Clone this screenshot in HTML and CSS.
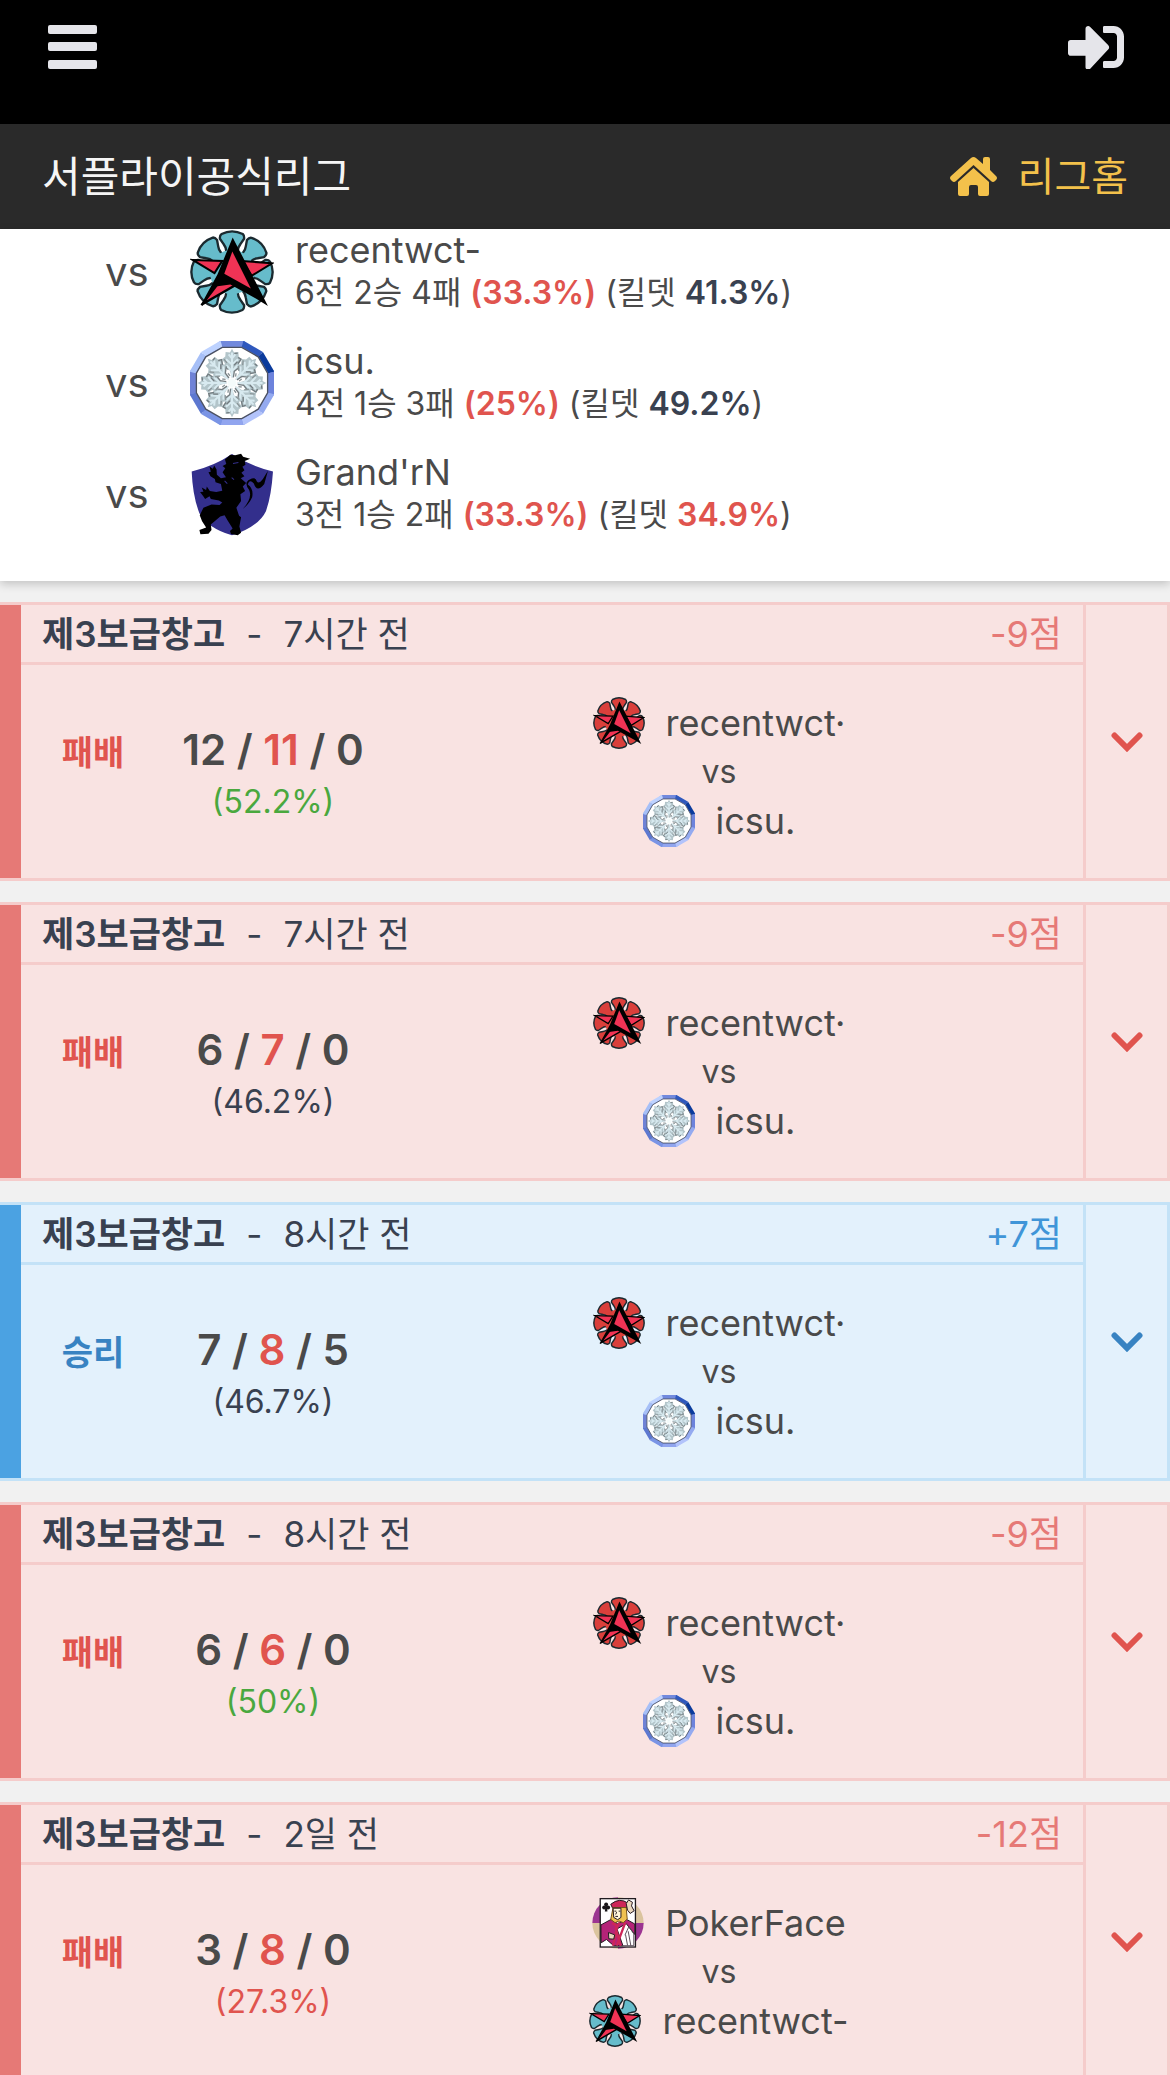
FILE: index.html
```html
<!DOCTYPE html>
<html lang="ko">
<head>
<meta charset="utf-8">
<meta name="viewport" content="width=device-width, initial-scale=1">
<title>서플라이공식리그</title>
<link rel="stylesheet" href="styles.css">
</head>
<body>
<svg class="sprite" aria-hidden="true">
  <defs>
    <path id="petal" d="M108 64 Q107 50 100 42 L89 26 Q88 16 94 12 Q125 -4 157 12 Q162 16 161 26 L150 42 Q143 50 142 64"/>
    <g id="plume">
      <path d="M125 112 L119 88 L100 78 L104 66 L95 54 L105 46 L106 33 L119 34 L125 23 L131 34 L144 33 L145 46 L155 54 L146 66 L150 78 L131 88Z" fill="#b3c5ca"/>
      <path d="M125 108V34M125 90L108 72M125 90L142 72M125 70L107 54M125 70L143 54M125 52L115 40M125 52L135 40" fill="none" stroke="#d8eaf0" stroke-width="6"/>
      <path d="M129 108L132 90L148 78M143 67L152 54L143 49M142 36L132 37M131 72L141 62" fill="none" stroke="#737c80" stroke-width="4"/>
      <path d="M114 85L103 76M110 65L101 54M119 104L113 96" fill="none" stroke="#8b9598" stroke-width="4"/>
    </g>
  </defs>
  <symbol id="flower" viewBox="0 0 250 250">
    <g stroke="#1b2a30" stroke-width="7" stroke-linejoin="round">
      <use href="#petal"/>
      <use href="#petal" transform="rotate(45 125 125)"/>
      <use href="#petal" transform="rotate(90 125 125)"/>
      <use href="#petal" transform="rotate(135 125 125)"/>
      <use href="#petal" transform="rotate(180 125 125)"/>
      <use href="#petal" transform="rotate(225 125 125)"/>
      <use href="#petal" transform="rotate(270 125 125)"/>
      <use href="#petal" transform="rotate(315 125 125)"/>
    </g>
    <circle cx="125" cy="125" r="66"/>
    <path d="M8 89L96 92L73 128ZM154 92L244 99L184 136Z" fill="#f03355" stroke="#000" stroke-width="6"/>
    <path d="M34 224L93 147L146 158L38 220Z" fill="#f03355" stroke="#000" stroke-width="7"/>
    <path d="M127 22L232 226L196 204L120 162L77 168L34 220L82 132Z" fill="#000"/>
    <path d="M126 64L181 174L102 130Z" fill="#f03355"/>
  </symbol>
  <symbol id="diamond" viewBox="0 0 250 250">
    <path d="M91-1H159L204 33L217 46L251 91V159L217 204L204 217L159 251H91L46 217L33 204L-1 159V91L33 46L46 33Z" fill="#7d93e2"/>
    <path d="M91-1H159L154 17H96Z" fill="#7189dd"/>
    <path d="M159-1L217 33L204 46L154 17Z" fill="#2f58bd"/>
    <path d="M217 33L251 91L233 96L204 46Z" fill="#0b3b9c"/>
    <path d="M251 91V159L233 154V96Z" fill="#6d83dc"/>
    <path d="M251 159L217 217L204 204L233 154Z" fill="#94aaf0"/>
    <path d="M217 217L159 251L154 233L204 204Z" fill="#b2c3fb"/>
    <path d="M159 251H91L96 233H154Z" fill="#91a5ef"/>
    <path d="M91 251L33 217L46 204L96 233Z" fill="#7a94e5"/>
    <path d="M33 217L-1 159L17 154L46 204Z" fill="#5d78d0"/>
    <path d="M-1 159V91L17 96V154Z" fill="#6f82d6"/>
    <path d="M-1 91L33 33L46 46L17 96Z" fill="#a6bff7"/>
    <path d="M33 33L91-1L96 17L46 46Z" fill="#bdd2ff"/>
    <path d="M96 19H154L203 47L231 96V154L203 203L154 231H96L47 203L19 154V96L47 47Z" fill="#fff" stroke="#4b5162" stroke-width="4"/>
    <use href="#plume"/>
    <use href="#plume" transform="rotate(45 125 125)"/>
    <use href="#plume" transform="rotate(90 125 125)"/>
    <use href="#plume" transform="rotate(135 125 125)"/>
    <use href="#plume" transform="rotate(180 125 125)"/>
    <use href="#plume" transform="rotate(225 125 125)"/>
    <use href="#plume" transform="rotate(270 125 125)"/>
    <use href="#plume" transform="rotate(315 125 125)"/>
    <circle cx="125" cy="125" r="12" fill="#f4fbfb"/>
  </symbol>
  <symbol id="lion" viewBox="0 0 250 250">
    <path d="M125 6Q180 42 247 58Q242 132 226 176Q204 222 125 248Q52 226 28 182Q8 132 5 58Q72 42 125 6Z" fill="#332f8c"/>
    <path d="M104 22L120 8L134 10L152 5L158 14L179 20L163 27L165 38L156 44L162 54L153 62L162 72L151 78L167 92L157 103L164 116L150 126L152 146L138 166L146 190L152 194L147 222L152 240L142 248L122 244L119 235L127 228L112 204L103 188L90 192L62 216L64 232L55 243L31 245L28 232L48 225L36 206L29 188L40 166L64 156L88 158L96 150L86 144L62 140L58 132L45 140L39 131L30 119L40 118L35 106L48 113L50 103L59 116L78 119L96 115L92 95L76 90L74 80L61 72L55 60L62 59L58 43L68 50L72 40L79 52L80 68L92 78L107 75L97 60L105 48L97 42L108 36Z"/>
    <path d="M119 180L145 189V237L127 238L128 218L110 198Z"/>
    <path d="M157 170Q187 137 176 113Q159 91 178 82Q195 72 199 88Q205 96 217 80L232 56L221 95Q199 123 190 94Q177 78 172 97Q190 109 185 135Q176 155 157 170" fill="#000"/>
    <path d="M128 34L144 31M124 76L131 82M103 86L111 94" stroke="#332f8c" stroke-width="3"/>
  </symbol>
  <symbol id="card" viewBox="0 0 158 158">
    <path d="M79 79V1A78 78 0 0 0 1 79Z" fill="#9c3591"/>
    <path d="M79 79V1A78 78 0 0 1 157 79Z" fill="#dbc49e"/>
    <path d="M79 79V157A78 78 0 0 1 1 79Z" fill="#dbc49e"/>
    <path d="M79 79V157A78 78 0 0 0 157 79Z" fill="#9c3591"/>
    <rect x="25" y="5" width="107" height="147" fill="#fff" stroke="#211c20" stroke-width="4"/>
    <path d="M27 85L58 68L78 81L105 68L130 82V114L104 81L76 97L94 148H66L44 129L28 139Z" fill="#b52378" stroke="#241720" stroke-width="3"/>
    <path d="M57 22Q84 0 110 19L106 33H62Z" fill="#cd2658" stroke="#241720" stroke-width="3"/>
    <path d="M64 32H104L107 67L95 78L82 73L70 78L57 68Z" fill="#efc150" stroke="#75511a" stroke-width="3"/>
    <path d="M64 34H88V62L78 69L66 62Z" fill="#fff6db" stroke="#241720" stroke-width="3"/>
    <path d="M68 43H74M81 43H86M75 46L72 53M71 59H79" stroke="#241720" stroke-width="3"/>
    <path d="M61 79L77 88L64 148M101 78L75 148M84 78L72 94L87 149" fill="none" stroke="#cd2658" stroke-width="7"/>
    <path d="M50 108L69 115L66 128L51 127Z" fill="#ead7bd" stroke="#241720" stroke-width="3"/>
    <path d="M104 20L111 9L123 16L120 27L128 42L116 50L108 40Z" fill="#ead7bd" stroke="#241720" stroke-width="3"/>
    <path d="M100 116L112 90L127 112V148H92M110 104L118 148M102 115L108 147" fill="none" stroke="#5b4d59" stroke-width="3"/>
    <g fill="#171417"><circle cx="43" cy="23" r="6"/><circle cx="37" cy="32" r="6"/><circle cx="49" cy="32" r="6"/><path d="M41 27H45L47 44H39Z"/></g>
  </symbol>
  <symbol id="chevron" viewBox="0 0 32 20">
    <path d="M3.500 3.500L16 16L28.500 3.500" fill="none" stroke="currentColor" stroke-width="6" stroke-linecap="round"/>
  </symbol>
</svg>

<header class="topbar">
  <button class="icon-button" type="button" aria-label="메뉴">
    <svg class="menu-icon" viewBox="0 0 49 44"><g fill="#e5e5ea"><rect width="49" height="9" rx="2"/><rect y="17" width="49" height="9" rx="2"/><rect y="35" width="49" height="9" rx="2"/></g></svg>
  </button>
  <a class="icon-button" href="#login" aria-label="로그인">
    <svg class="login-icon" viewBox="0 62 512 388"><path fill="#e5e5ea" d="M416 448h-84c-6.600 0-12-5.400-12-12v-40c0-6.600 5.400-12 12-12h84c17.700 0 32-14.300 32-32V160c0-17.700-14.300-32-32-32h-84c-6.600 0-12-5.400-12-12V76c0-6.600 5.400-12 12-12h84c53 0 96 43 96 96v192c0 53-43 96-96 96zm-47-209L201 71c-15-15-41-4.500-41 17v104H24c-13.300 0-24 10.700-24 24v96c0 13.300 10.700 24 24 24h136v104c0 21.500 26 32 41 17l168-180c9.300-9.400 9.300-24.600 0-34z"/></svg>
  </a>
</header>

<nav class="league">
  <h1 class="league-title">서플라이공식리그</h1>
  <a class="league-home" href="#home">
    <svg class="home-icon" viewBox="0 0 47 39"><path fill="#f3c14b" d="M21 1Q23.500 -1 26 1L33 7V2Q33 0 35 0H38Q40 0 40 2V13L46 19Q48 21 46 23L45 24Q43 26 41 24L23.500 8L6 24Q4 26 2 24L1 23Q-1 21 1 19ZM23.500 11L39 25V37Q39 39 37 39H30Q28 39 28 37V30Q28 28 26 28H21Q19 28 19 30V37Q19 39 17 39H10Q8 39 8 37V25Z"/></svg>
    <span>리그홈</span>
  </a>
</nav>

<main>
  <section class="rivals">
    <ul class="rival-list">
      <li class="rival">
        <span class="rival-vs">vs</span>
        <svg class="rival-emblem teal"><use href="#flower"/></svg>
        <div class="rival-info">
          <p class="rival-name">recentwct-</p>
          <p class="rival-record">6전 2승 4패 <b class="low">(33.3%)</b> (킬뎃 <b class="mid">41.3%</b>)</p>
        </div>
      </li>
      <li class="rival">
        <span class="rival-vs">vs</span>
        <svg class="rival-emblem"><use href="#diamond"/></svg>
        <div class="rival-info">
          <p class="rival-name">icsu.</p>
          <p class="rival-record">4전 1승 3패 <b class="low">(25%)</b> (킬뎃 <b class="mid">49.2%</b>)</p>
        </div>
      </li>
      <li class="rival">
        <span class="rival-vs">vs</span>
        <svg class="rival-emblem"><use href="#lion"/></svg>
        <div class="rival-info">
          <p class="rival-name">Grand'rN</p>
          <p class="rival-record">3전 1승 2패 <b class="low">(33.3%)</b> (킬뎃 <b class="low">34.9%</b>)</p>
        </div>
      </li>
    </ul>
  </section>

  <section class="matches">
    <article class="match loss">
      <div class="match-main">
        <header class="match-head"><b class="map">제3보급창고</b><span>-</span><span>7시간 전</span><span class="score">-9점</span></header>
        <div class="match-body">
          <strong class="result">패배</strong>
          <div class="stats"><p class="kda">12 / <span class="low">11</span> / 0</p><p class="ratio high">(52.2%)</p></div>
          <div class="teams">
            <p class="team"><svg class="emblem red"><use href="#flower"/></svg>recentwct·</p>
            <p class="versus">vs</p>
            <p class="team"><svg class="emblem"><use href="#diamond"/></svg>icsu.</p>
          </div>
        </div>
      </div>
      <button class="expand" type="button" aria-label="자세히"><svg class="chevron"><use href="#chevron"/></svg></button>
    </article>

    <article class="match loss">
      <div class="match-main">
        <header class="match-head"><b class="map">제3보급창고</b><span>-</span><span>7시간 전</span><span class="score">-9점</span></header>
        <div class="match-body">
          <strong class="result">패배</strong>
          <div class="stats"><p class="kda">6 / <span class="low">7</span> / 0</p><p class="ratio">(46.2%)</p></div>
          <div class="teams">
            <p class="team"><svg class="emblem red"><use href="#flower"/></svg>recentwct·</p>
            <p class="versus">vs</p>
            <p class="team"><svg class="emblem"><use href="#diamond"/></svg>icsu.</p>
          </div>
        </div>
      </div>
      <button class="expand" type="button" aria-label="자세히"><svg class="chevron"><use href="#chevron"/></svg></button>
    </article>

    <article class="match win">
      <div class="match-main">
        <header class="match-head"><b class="map">제3보급창고</b><span>-</span><span>8시간 전</span><span class="score">+7점</span></header>
        <div class="match-body">
          <strong class="result">승리</strong>
          <div class="stats"><p class="kda">7 / <span class="low">8</span> / 5</p><p class="ratio">(46.7%)</p></div>
          <div class="teams">
            <p class="team"><svg class="emblem red"><use href="#flower"/></svg>recentwct·</p>
            <p class="versus">vs</p>
            <p class="team"><svg class="emblem"><use href="#diamond"/></svg>icsu.</p>
          </div>
        </div>
      </div>
      <button class="expand" type="button" aria-label="자세히"><svg class="chevron"><use href="#chevron"/></svg></button>
    </article>

    <article class="match loss">
      <div class="match-main">
        <header class="match-head"><b class="map">제3보급창고</b><span>-</span><span>8시간 전</span><span class="score">-9점</span></header>
        <div class="match-body">
          <strong class="result">패배</strong>
          <div class="stats"><p class="kda">6 / <span class="low">6</span> / 0</p><p class="ratio high">(50%)</p></div>
          <div class="teams">
            <p class="team"><svg class="emblem red"><use href="#flower"/></svg>recentwct·</p>
            <p class="versus">vs</p>
            <p class="team"><svg class="emblem"><use href="#diamond"/></svg>icsu.</p>
          </div>
        </div>
      </div>
      <button class="expand" type="button" aria-label="자세히"><svg class="chevron"><use href="#chevron"/></svg></button>
    </article>

    <article class="match loss">
      <div class="match-main">
        <header class="match-head"><b class="map">제3보급창고</b><span>-</span><span>2일 전</span><span class="score">-12점</span></header>
        <div class="match-body">
          <strong class="result">패배</strong>
          <div class="stats"><p class="kda">3 / <span class="low">8</span> / 0</p><p class="ratio low">(27.3%)</p></div>
          <div class="teams">
            <p class="team"><svg class="emblem"><use href="#card"/></svg>PokerFace</p>
            <p class="versus">vs</p>
            <p class="team"><svg class="emblem teal"><use href="#flower"/></svg>recentwct-</p>
          </div>
        </div>
      </div>
      <button class="expand" type="button" aria-label="자세히"><svg class="chevron"><use href="#chevron"/></svg></button>
    </article>
  </section>
</main>
</body>
</html>
```

FILE: styles.css
```css
* { box-sizing: border-box; }

body {
  margin: 0;
  background: #f1f1f1;
  color: #4a4a4a;
  font-family: Inter, "Noto Sans CJK KR", sans-serif;
  font-size: 36px;
  line-height: 42px;
}

p, h1, ul { margin: 0; padding: 0; }
ul { list-style: none; }
b { font-weight: 600; }
svg { display: block; flex-shrink: 0; }
a { text-decoration: none; }
button { border: 0; padding: 0; background: none; font: inherit; color: inherit; }

.sprite { position: absolute; width: 0; height: 0; }

.low { color: #e0544e; }
.mid { color: #394150; }
.high { color: #4aa83e; }
.teal { fill: #66bccb; }
.red { fill: #da3f3b; }

/* top bars */
.topbar {
  display: flex;
  justify-content: space-between;
  height: 124px;
  padding: 25px 46px 0 48px;
  background: #000;
}
.icon-button { height: 44px; }
.menu-icon { width: 49px; height: 44px; }
.login-icon { width: 56px; height: 44px; }

.league {
  display: flex;
  align-items: center;
  justify-content: space-between;
  height: 105px;
  padding: 0 42px;
  background: #2a2a2a;
  font-size: 40px;
}
.league-title { color: #f5f5f5; font-size: 42px; font-weight: 400; }
.league-home { display: flex; align-items: center; gap: 21px; color: #f3c14b; }
.home-icon { width: 47px; height: 39px; }

/* rival list */
.rivals {
  padding: 1px 42px 45px 105px;
  background: #fff;
  box-shadow: 0 3px 9px rgba(0, 0, 0, .2);
}
.rival-list { display: grid; gap: 27px; }
.rival { display: flex; align-items: center; height: 84px; }
.rival-vs { width: 85px; font-size: 40px; }
.rival-emblem { width: 84px; height: 84px; }
.rival-info { margin-left: 21px; }
.rival-record { font-size: 32px; line-height: 44px; }

/* match cards */
.matches { display: grid; gap: 21px; padding: 21px 0; }
.match {
  display: flex;
  border: 3px solid var(--line);
  border-left: 0;
  background: var(--fill);
}
.loss { --line: #f5cccb; --fill: #f9e3e2; --bar: #e67976; --text: #e0544e; --score: #e67976; }
.win { --line: #c3e2f7; --fill: #e3f1fc; --bar: #4ba2e2; --text: #3883c2; --score: #4095d8; }

.match-main { flex: 1; border-left: 21px solid var(--bar); }
.match-head {
  display: flex;
  align-items: center;
  gap: 21px;
  height: 60px;
  padding: 0 21px;
  border-bottom: 3px solid var(--line);
  color: #394150;
  font-size: 35px;
}
.score { margin-left: auto; color: var(--score); font-size: 36px; }

.match-body {
  display: grid;
  grid-template-columns: 144px 216px 1fr;
  align-items: center;
  height: 213px;
  padding-right: 26px;
  text-align: center;
}
.result { padding-bottom: 38px; color: var(--text); font-size: 34px; font-weight: 700; }
.stats { padding-top: 8px; }
.kda { font-size: 42px; font-weight: 600; line-height: 52px; }
.ratio { font-size: 32px; line-height: 52px; }
.ratio:not(.low):not(.high) { color: #394150; }
.team { display: flex; align-items: center; justify-content: center; gap: 21px; height: 52px; }
.emblem { width: 52px; height: 52px; }
.versus { font-size: 32px; line-height: 46px; }

.expand {
  display: flex;
  align-items: center;
  justify-content: center;
  width: 84px;
  border-left: 3px solid var(--line);
  color: var(--text);
}
.chevron { width: 32px; height: 20px; }
```
